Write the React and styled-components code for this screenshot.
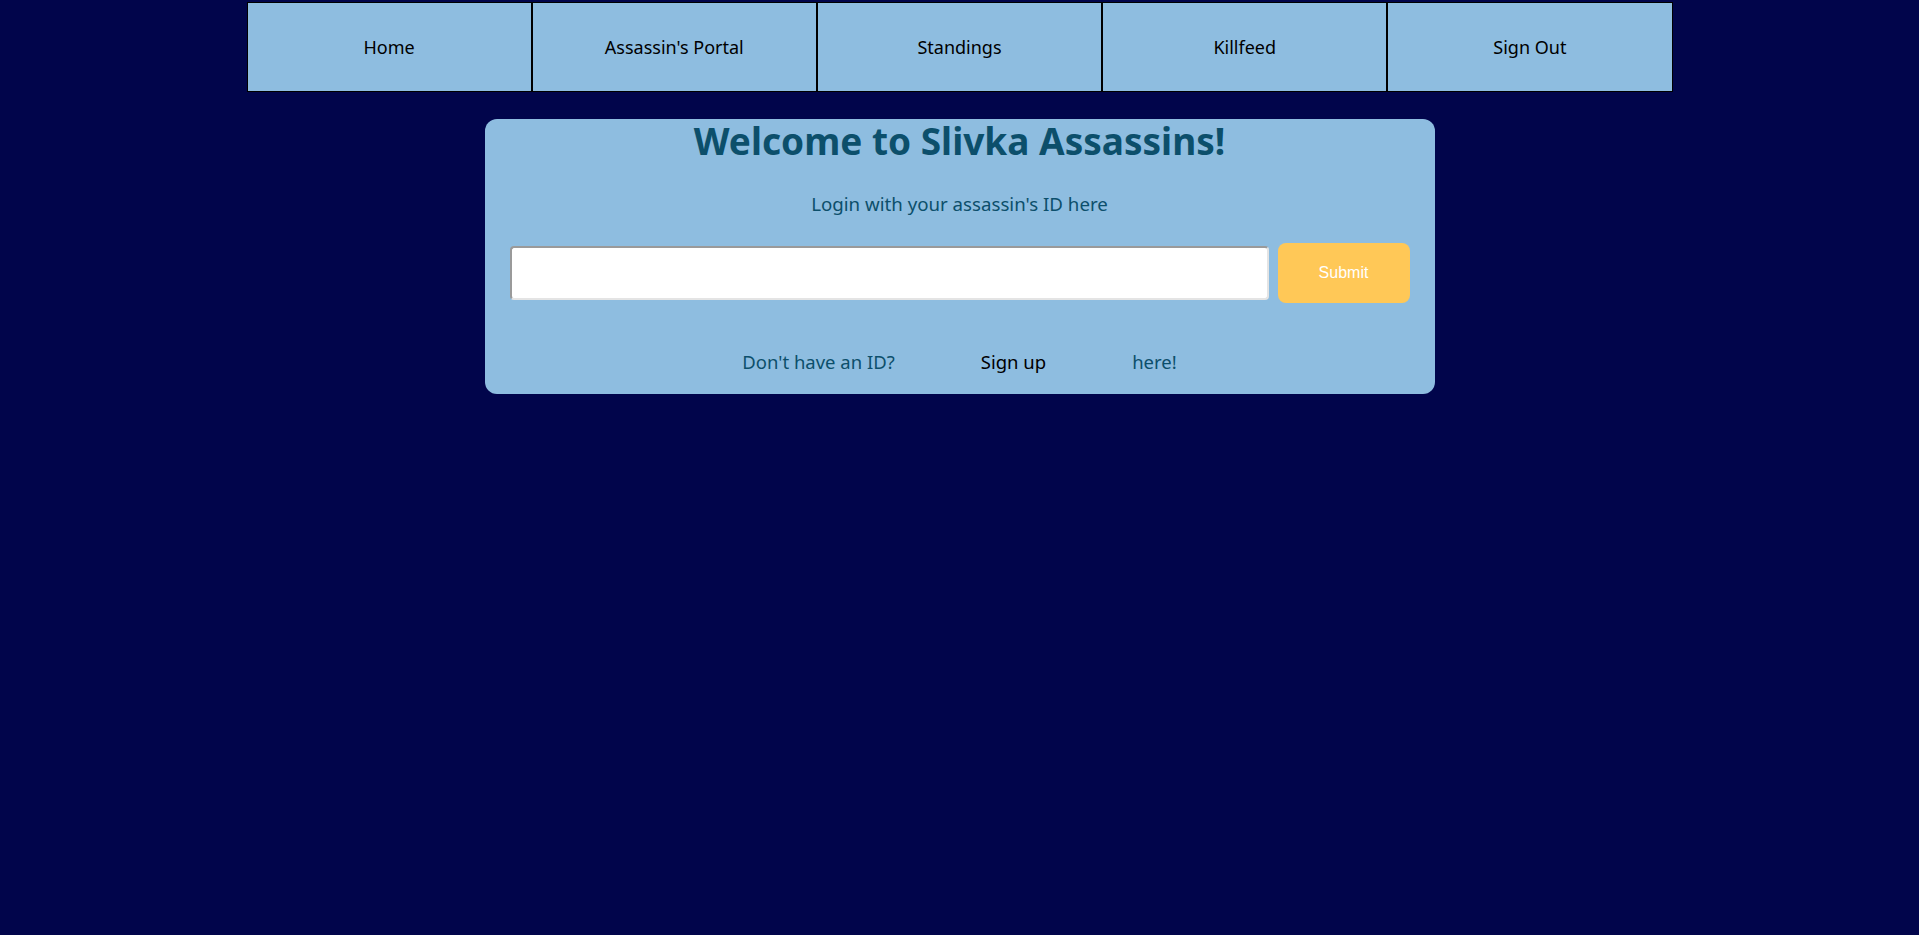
import React, { useState } from "react";
import styled, { createGlobalStyle } from "styled-components";

const GlobalStyle = createGlobalStyle`
  html, body {
    margin: 0;
    padding: 0;
    background: #01054b;
    min-height: 100%;
  }
  body {
    font-family: "Trebuchet MS", "Noto Sans", sans-serif;
  }
`;

const links = ["Home", "Assassin's Portal", "Standings", "Killfeed", "Sign Out"];

const App = () => {
  const [id, setId] = useState("");
  return (
    <>
      <GlobalStyle />
      <Nav>
        {links.map((label) => (
          <NavItem key={label} href="#">
            {label}
          </NavItem>
        ))}
      </Nav>
      <Card>
        <Title>Welcome to Slivka Assassins!</Title>
        <Subtitle>Login with your assassin's ID here</Subtitle>
        <Form onSubmit={(e) => e.preventDefault()}>
          <IdInput value={id} onChange={(e) => setId(e.target.value)} />
          <SubmitButton type="submit">Submit</SubmitButton>
        </Form>
        <SignupRow>
          <span>Don't have an ID?</span>
          <SignupLink href="#">Sign up</SignupLink>
          <span>here!</span>
        </SignupRow>
      </Card>
    </>
  );
};

const Nav = styled.nav`
  display: grid;
  grid-template-columns: repeat(5, 1fr);
  width: 1426px;
  margin: 2px auto 0;
`;

const NavItem = styled.a`
  display: flex;
  align-items: center;
  justify-content: center;
  height: 88px;
  border: 1px solid #000;
  background: #8ebde0;
  color: #000;
  font-size: 18px;
  text-decoration: none;
`;

const Card = styled.div`
  width: 950px;
  box-sizing: border-box;
  margin: 27px auto 0;
  padding: 0 25px 20px;
  background: #8ebde0;
  border-radius: 12px;
  color: #0c4f6b;
`;

const Title = styled.h1`
  margin: 0;
  font-size: 37px;
  line-height: 44px;
  font-weight: bold;
  text-align: center;
`;

const Subtitle = styled.p`
  margin: 29px 0 0;
  font-size: 18.7px;
  line-height: 24px;
  text-align: center;
`;

const Form = styled.form`
  display: flex;
  align-items: center;
  gap: 9px;
  margin-top: 27px;
`;

const IdInput = styled.input`
  flex: 1;
  height: 54px;
  box-sizing: border-box;
  border-style: solid;
  border-width: 2px;
  border-color: #9a9a9a #e4e4e4 #e4e4e4 #9a9a9a;
  border-radius: 4px;
  background: #fff;
  font-size: 18px;
  padding: 0 8px;
  outline: none;
`;

const SubmitButton = styled.button`
  width: 132px;
  height: 60px;
  border: none;
  border-radius: 8px;
  background: #ffc857;
  color: #fff;
  font-family: "Liberation Sans", Arial, sans-serif;
  font-size: 16px;
  cursor: pointer;
`;

const SignupRow = styled.div`
  display: flex;
  justify-content: center;
  gap: 86px;
  margin-top: 47px;
  font-size: 18.5px;
  line-height: 24px;
`;

const SignupLink = styled.a`
  color: #000;
  text-decoration: none;
`;

export default App;
